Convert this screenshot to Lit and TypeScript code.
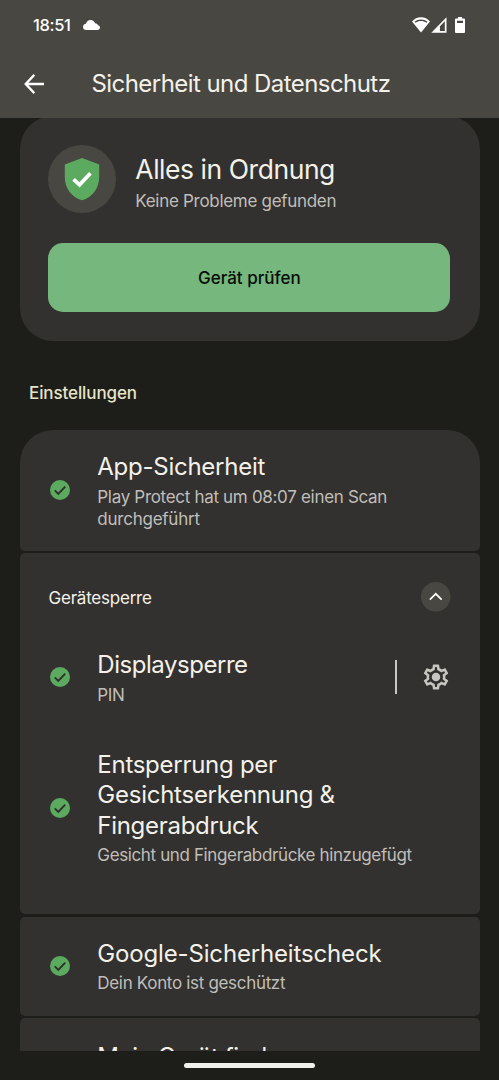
import { LitElement, html, css, nothing } from "lit";

interface Line { text: string; tracking: number }
interface Entry { title: Line[]; summary: Line[]; gear?: boolean }

const line = (text: string, tracking: number): Line => ({ text, tracking });

const appSecurity: Entry = {
  title: [line("App-Sicherheit", -0.26)],
  summary: [line("Play Protect hat um 08:07 einen Scan", -0.31), line("durchgeführt", -0.24)],
};
const deviceLock: Entry[] = [
  { title: [line("Displaysperre", -0.46)], summary: [line("PIN", -0.4)], gear: true },
  {
    title: [line("Entsperrung per", -0.27), line("Gesichtserkennung &", -0.25), line("Fingerabdruck", -0.29)],
    summary: [line("Gesicht und Fingerabdrücke hinzugefügt", -0.37)],
  },
];
const googleCheck: Entry = {
  title: [line("Google-Sicherheitscheck", -0.16)],
  summary: [line("Dein Konto ist geschützt", -0.32)],
};
const findDevice: Entry = { title: [line("Mein Gerät finden", -0.36)], summary: [] };

const gearPath =
  "M19.43 12.98c.04-.32.07-.64.07-.98 0-.34-.03-.66-.07-.98l2.11-1.65c.19-.15.24-.42.12-.64l-2-3.46c-.09-.16-.26-.25-.44-.25-.06 0-.12.01-.17.03l-2.49 1c-.52-.4-1.08-.73-1.69-.98l-.38-2.65C14.46 2.18 14.25 2 14 2h-4c-.25 0-.46.18-.49.42l-.38 2.65c-.61.25-1.17.59-1.69.98l-2.49-1c-.06-.02-.12-.03-.18-.03-.17 0-.34.09-.43.25l-2 3.46c-.13.22-.07.49.12.64l2.11 1.65c-.04.32-.07.65-.07.98 0 .33.03.66.07.98l-2.11 1.65c-.19.15-.24.42-.12.64l2 3.46c.09.16.26.25.44.25.06 0 .12-.01.17-.03l2.49-1c.52.4 1.08.73 1.69.98l.38 2.65c.03.24.24.42.49.42h4c.25 0 .46-.18.49-.42l.38-2.65c.61-.25 1.17-.59 1.69-.98l2.49 1c.06.02.12.03.18.03.17 0 .34-.09.43-.25l2-3.46c.12-.22.07-.49-.12-.64l-2.11-1.65zm-1.98-1.71c.04.31.05.52.05.73 0 .21-.02.43-.05.73l-.14 1.13.89.7 1.08.84-.7 1.21-1.27-.51-1.04-.42-.9.68c-.43.32-.84.56-1.25.73l-1.06.43-.16 1.13-.2 1.35h-1.4l-.19-1.35-.16-1.13-1.06-.43c-.43-.18-.83-.41-1.23-.71l-.91-.7-1.06.43-1.27.51-.7-1.21 1.08-.84.89-.7-.14-1.13c-.03-.31-.05-.54-.05-.74s.02-.43.05-.73l.14-1.13-.89-.7-1.08-.84.7-1.21 1.27.51 1.04.42.9-.68c.43-.32.84-.56 1.25-.73l1.06-.43.16-1.13.2-1.35h1.39l.19 1.35.16 1.13 1.06.43c.43.18.83.41 1.23.71l.91.7 1.06-.43 1.27-.51.7 1.21-1.07.85-.89.7.14 1.13z";

class SettingsEntry extends LitElement {
  static properties = { entry: { attribute: false } };
  declare entry: Entry;

  static styles = css`
    :host { display: block; }
    .row { display: flex; align-items: center; padding: 21px 29px 21.2px; }
    .check { width: 24px; height: 24px; margin-right: 25px; margin-left: -0.2px; flex: none; }
    .blank { visibility: hidden; }
    .body { flex: 1; min-width: 0; display: flex; flex-direction: column; white-space: nowrap; }
    .title { font-size: 24px; line-height: 30.4px; padding-top: 1px; color: #f4f1ea; }
    .single { padding-top: 2.5px; }
    .summary { font-size: 17px; line-height: 22px; margin-top: 3.3px; color: #c0beb9; }
    .divider { width: 1.6px; height: 34px; background: #c8c6c0; margin-right: 24px; }
    .gear { width: 30px; height: 30px; fill: #c8c6c0; flex: none; }
    .lifted { padding-bottom: 22.2px; padding-top: 20.5px; }
  `;

  private lines(lines: Line[]) {
    return lines.map((l) => html`<div style="letter-spacing:${l.tracking}px">${l.text}</div>`);
  }

  render() {
    const { title, summary, gear } = this.entry;
    return html`
      <div class="row ${gear ? "lifted" : ""}">
        <svg class="check ${summary.length ? "" : "blank"}" viewBox="0 0 24 24">
          <circle cx="12" cy="12" r="10" fill="#5baa60" />
          <path d="M6.8 12.3 L10.3 15.8 L17.2 8.7" fill="none" stroke="#2f302c" stroke-width="1.9" />
        </svg>
        <div class="body">
          <div class="title ${summary.length ? "" : "single"}">${this.lines(title)}</div>
          ${summary.length ? html`<div class="summary">${this.lines(summary)}</div>` : nothing}
        </div>
        ${gear
          ? html`<div class="divider"></div>
              <svg class="gear" viewBox="0 0 24 24"><path d=${gearPath} /><circle cx="12" cy="12" r="3.4" /></svg>`
          : nothing}
      </div>
    `;
  }
}
customElements.define("settings-entry", SettingsEntry);

class AppRoot extends LitElement {
  static styles = css`
    :host {
      display: flex; flex-direction: column; height: 1080px; overflow: hidden;
      background: #1d1e19; color: #f4f1ea; font-family: Inter, Roboto, sans-serif;
    }
    .top { flex: none; height: 117.7px; background: #484742; }
    .status { display: flex; align-items: center; height: 50px; padding: 0 34px 0 33px; color: #fff; }
    .clock { font-size: 16.5px; font-weight: 500; letter-spacing: -0.35px; line-height: 20px; }
    .cloud { width: 17px; height: 10px; margin-left: 12.5px; margin-right: auto; }
    .wifi { width: 18px; height: 16px; }
    .signal { width: 16px; height: 16px; margin-left: 1.5px; }
    .battery { width: 10px; height: 16px; margin-left: 8px; }
    .bar { display: flex; align-items: center; height: 66px; padding-left: 24px; }
    .back { width: 21px; height: 20px; margin-right: 46.5px; margin-top: 2px; }
    .heading { font-size: 24px; line-height: 30px; letter-spacing: -0.56px; padding-top: 2px; white-space: nowrap; }
    .scroll { flex: 1; min-height: 0; overflow: hidden; padding: 0 19.5px; }
    .overview { background: #32312f; border-radius: 33px; height: 225.5px; margin-top: -2.2px; padding: 29.5px 29px 0; box-sizing: border-box; }
    .state { display: flex; align-items: center; height: 68px; }
    .badge { width: 68px; height: 68px; margin-right: 19.3px; margin-left: -0.5px; flex: none; }
    .ok { font-size: 26.5px; line-height: 32px; letter-spacing: -0.45px; margin-top: 7px; white-space: nowrap; }
    .none { font-size: 17px; line-height: 22px; letter-spacing: -0.3px; color: #c0beb9; margin-top: 5px; white-space: nowrap; }
    .scan {
      display: flex; align-items: center; justify-content: center; width: 402px; height: 69px;
      margin-top: 30px; margin-left: -0.2px; border: 0; padding: 0; border-radius: 15px; background: #75b77c;
      font: 500 17px Inter, Roboto, sans-serif; color: #080b08;
    }
    .section { color: #e6e5c8; font-size: 17px; font-weight: 500; line-height: 22px; letter-spacing: -0.1px; margin: 40.6px 0 26.4px 9.5px; }
    .list { display: flex; flex-direction: column; gap: 2.6px; }
    .card { background: #32312f; border-radius: 5px; }
    .first { border-radius: 33px 33px 5px 5px; }
    .lock { padding-bottom: 26.6px; }
    .group { display: flex; align-items: center; justify-content: space-between; padding: 29px 29px 16.5px; }
    .name { font-size: 17px; line-height: 22px; letter-spacing: -0.22px; padding-top: 1px; }
    .fold { width: 29.5px; height: 29.5px; display: block; }
    .nav { flex: none; height: 29px; display: flex; justify-content: center; align-items: center; }
    .pill { width: 131px; height: 5px; border-radius: 3px; background: #f0f0ef; }
  `;

  render() {
    return html`
      <header class="top">
        <div class="status">
          <span class="clock">18:51</span>
          <svg class="cloud" viewBox="0 0 17 10">
            <path fill="#fff" d="M3.2 10 C1.3 10 0 8.700 0 7 C0 5.300 1.2 4 2.900 3.800 C3.500 1.500 5.300 0 7.500 0 C9.700 0 11.400 1.300 12.100 3.200 C14 3.400 14.600 4.300 14.900 5.200 C16.200 5.400 17 6.300 17 7.500 C17 9 15.900 10 14.500 10 Z" />
          </svg>
          <svg class="wifi" viewBox="0 0 18 16">
            <path fill="#fff" fill-rule="evenodd" d="M9 .3 C12.600 .3 15.700 1.900 18 4.400 L9 15.400 L0 4.400 C2.300 1.900 5.400 .3 9 .3 Z M2.700 4.700 L3.500 5.700 C5.200 4.700 7 4.100 9 4.100 C11 4.100 12.800 4.700 14.500 5.700 L15.300 4.700 C13.600 3.300 11.400 2.500 9 2.500 C6.600 2.500 4.400 3.300 2.700 4.700 Z" />
          </svg>
          <svg class="signal" viewBox="0 0 16 16">
            <path fill="#fff" fill-rule="evenodd" d="M15.500 .3 V15.700 H.3 Z M13.800 4.300 L8.900 9.200 V14.100 H13.800 Z" />
          </svg>
          <svg class="battery" viewBox="0 0 10 16">
            <path fill="#fff" fill-rule="evenodd" d="M3 0 H7 V1.500 H9 Q10 1.500 10 2.500 V15 Q10 16 9 16 H1 Q0 16 0 15 V2.500 Q0 1.500 1 1.500 H3 Z M2 3.700 V6 H8 V3.700 Z" />
          </svg>
        </div>
        <div class="bar">
          <svg class="back" viewBox="0 0 21 20">
            <path d="M10.300 .9 L1.700 10 L10.300 19.100 M1.700 10 H20" fill="none" stroke="#fff" stroke-width="2.300" />
          </svg>
          <span class="heading">Sicherheit und Datenschutz</span>
        </div>
      </header>
      <main class="scroll">
        <section class="overview">
          <div class="state">
            <svg class="badge" viewBox="0 0 68 68">
              <circle cx="34" cy="34" r="34" fill="#484742" />
              <path fill="#5baa60" d="M34 13 L51.200 19.500 V32 C51.200 43 44.500 52.500 34 55.300 C23.500 52.500 16.800 43 16.800 32 V19.500 Z" />
              <path d="M25.600 34.300 L31.600 39.900 L42.400 28.300" fill="none" stroke="#fff" stroke-width="3.800" />
            </svg>
            <div>
              <div class="ok">Alles in Ordnung</div>
              <div class="none">Keine Probleme gefunden</div>
            </div>
          </div>
          <button class="scan">Gerät prüfen</button>
        </section>
        <div class="section">Einstellungen</div>
        <div class="list">
          <div class="card first"><settings-entry .entry=${appSecurity}></settings-entry></div>
          <div class="card lock">
            <div class="group">
              <span class="name">Gerätesperre</span>
              <svg class="fold" viewBox="0 0 30 30">
                <circle cx="15" cy="15" r="15" fill="#484742" />
                <path d="M9 18 L15 12 L21 18" fill="none" stroke="#fff" stroke-width="1.700" />
              </svg>
            </div>
            ${deviceLock.map((e) => html`<settings-entry .entry=${e}></settings-entry>`)}
          </div>
          <div class="card"><settings-entry .entry=${googleCheck}></settings-entry></div>
          <div class="card"><settings-entry .entry=${findDevice}></settings-entry></div>
        </div>
      </main>
      <footer class="nav"><div class="pill"></div></footer>
    `;
  }
}
customElements.define("app-root", AppRoot);
